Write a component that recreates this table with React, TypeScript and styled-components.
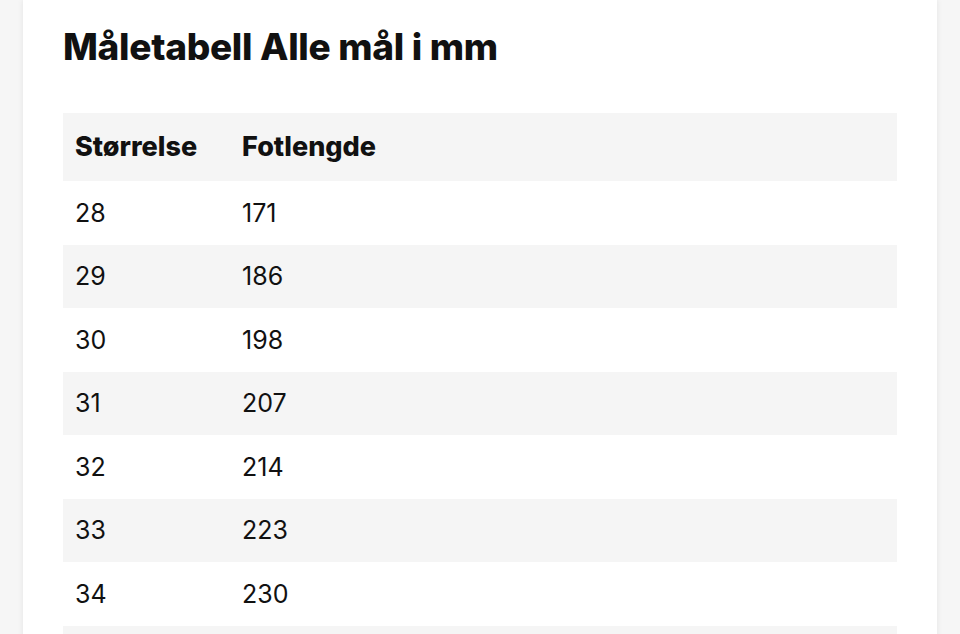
import React, { FC } from 'react'
import styled, { createGlobalStyle } from 'styled-components'

const rows: [string, string][] = [
	['28', '171'],
	['29', '186'],
	['30', '198'],
	['31', '207'],
	['32', '214'],
	['33', '223'],
	['34', '230'],
]

const GlobalStyle = createGlobalStyle`
	body {
		margin: 0;
		background: #f6f6f6;
		font-family: Inter, 'Liberation Sans', sans-serif;
		color: #111;
		overflow: hidden;
	}
`

const App: FC = () => (
	<>
		<GlobalStyle />
		<Page>
			<Card>
				<Title>Måletabell Alle mål i mm</Title>
				<Table>
					<thead>
						<tr>
							<HeadCell>Størrelse</HeadCell>
							<HeadCell>Fotlengde</HeadCell>
							<HeadCell />
						</tr>
					</thead>
					<tbody>
						{rows.map(([size, length]) => (
							<Row key={size}>
								<Cell>{size}</Cell>
								<Cell>{length}</Cell>
								<Cell />
							</Row>
						))}
						<Row>
							<Cell colSpan={3} />
						</Row>
					</tbody>
				</Table>
			</Card>
		</Page>
	</>
)

const Page = styled.div`
	height: 634px;
	padding: 0 23px;
`

const Card = styled.div`
	background: #fff;
	height: 100%;
	padding: 23px 40px 0;
	box-shadow: 0 0 6px rgba(0, 0, 0, 0.08);
`

const Title = styled.h1`
	margin: 0 0 43px;
	font-size: 37px;
	font-weight: 800;
	line-height: 47px;
	letter-spacing: -0.3px;
`

const Table = styled.table`
	width: 100%;
	border-collapse: collapse;
	font-size: 25px;
	line-height: 30px;
`

const HeadCell = styled.th`
	background: #f5f5f5;
	height: 68px;
	padding: 0 12px;
	text-align: left;
	font-size: 27px;
	font-weight: 800;
	width: 143px;
	&:last-child {
		width: auto;
	}
`

const Row = styled.tr`
	&:nth-child(even) {
		background: #f5f5f5;
	}
`

const Cell = styled.td`
	height: 63.5px;
	padding: 0 12px;
`

export default App
